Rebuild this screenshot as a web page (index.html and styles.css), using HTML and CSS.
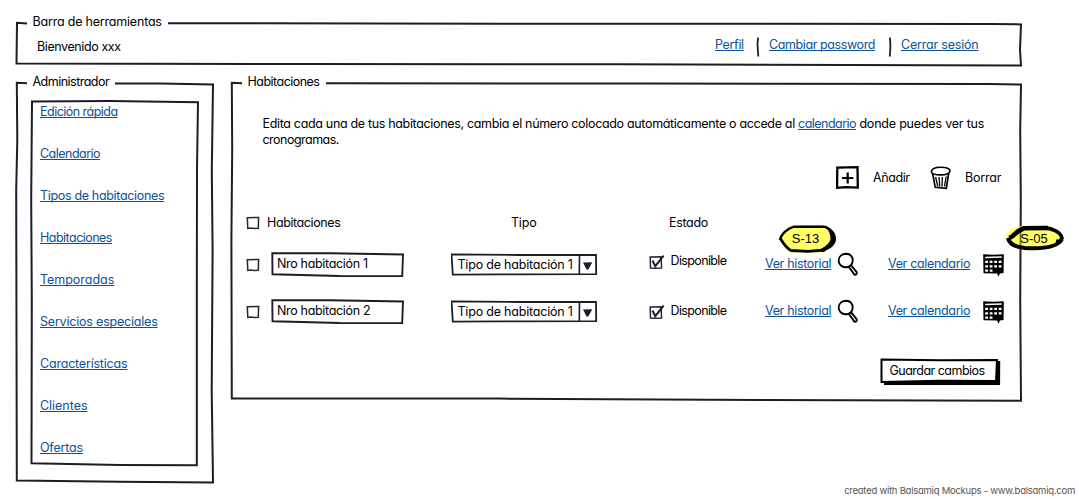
FILE: index.html
```html
<!DOCTYPE html>
<html lang="es">
<head>
<meta charset="utf-8">
<title>Habitaciones</title>
<link rel="stylesheet" href="styles.css">
</head>
<body>
<svg class="defs" width="0" height="0">
  <symbol id="box" viewBox="0 0 14 14"><path d="M1.3 1.8 12.6 1.5 12.3 12.2 8 12.6 5 12 1.8 12.5Z" fill="#fff" stroke="#242633" stroke-width="1.5"/></symbol>
  <symbol id="checked" viewBox="0 0 16 16"><path d="M1.2 3 12 2.7 12.6 14 6 14.3 1.5 14Z" fill="#fff" stroke="#242633" stroke-width="1.5"/><path d="M3.5 6.5 6.3 12.2 14.6 1.6" fill="none" stroke="#1b1b24" stroke-width="2"/></symbol>
  <symbol id="field" viewBox="271 252 133 25"><path d="M272.3 253.2 330 253.2 403 254.5 402.2 276.2 340 276 272.5 274.2Z" fill="#fff" stroke="#1c1d28" stroke-width="1.9"/></symbol>
  <symbol id="combo" viewBox="451 253 147 23"><path d="M451.5 254.3 520 255 596 255 596.2 274.2 500 274.4 452.8 274.6Z" fill="#fff" stroke="#1c1d28" stroke-width="1.8"/><path d="M579.5 255 579.3 274" stroke="#1c1d28" stroke-width="1.6"/><path d="M583 262.5 592.3 262.2 588.3 269.5 586.5 269.5Z" fill="#1c1d28"/></symbol>
  <symbol id="lens" viewBox="0 0 22 25"><path d="M9.2 1.8C13.5 1.8 15.9 5 15.7 8.8 15.5 13 12.5 15.5 8.7 15.3 4.5 15.2 1.7 12.2 1.6 8.5 1.7 4.5 5 1.9 9.2 1.8Z" fill="#fff" stroke="#000" stroke-width="1.9"/><path d="M11.8 14.8 14.2 13.4 19.8 20.3C20.1 22 19 23.2 17.4 22.6Z" fill="#fff" stroke="#000" stroke-width="1.9" stroke-linejoin="round"/></symbol>
  <symbol id="month" viewBox="0 0 22 24"><path d="M.2 1.2 10 1.8 20.8 1.2 20.6 20 17 20.5 15.5 23.5 14 20.6.5 20.2Z" fill="#000"/><path d="M2.2 4.5 18.8 4" stroke="#fff" stroke-width="1.6"/><g stroke="#fff" stroke-width="2.3"><path d="M2.2 8.8H18.8" stroke-dasharray="2.8 1.7"/><path d="M2.2 13.3H18.8" stroke-dasharray="2.8 1.7"/><path d="M2.2 17.7H10" stroke-dasharray="2.8 1.7"/></g></symbol>
</svg>

<header class="panel toolbar">
  <svg class="frame" viewBox="15 13 1008 54"><path d="M27 23.4 17 22.8 16.5 63.5 300 64 620 64.3 1021 65.4 1020 50 1021 24.4 990 24 500 23.7 168 23.2"/></svg>
  <div class="legend loose">Barra de herramientas</div>
  <div class="bar">
    <span class="welcome snug">Bienvenido xxx</span>
    <nav class="account">
      <a>Perfil</a><svg class="sep" viewBox="0 0 4 20"><path d="M2 .5 1.5 8 2.3 19.5"/></svg>
      <a class="snug">Cambiar password</a><svg class="sep" viewBox="0 0 4 20"><path d="M2 .5 2.4 9 1.8 19.5"/></svg>
      <a class="loose">Cerrar sesión</a>
    </nav>
  </div>
</header>

<div class="columns">
  <aside class="panel sidebar">
    <svg class="frame" viewBox="15 73 200 412"><path d="M27 83.2 16.8 82.8 17.3 140 16.2 190 16.8 480.5 120 481.8 213 482.6 211.7 390 212.6 250 211.8 170 213 84.6 160 83.6 115 83.4"/><path d="M32 101.5 110 101 198 102.3 197 170 196.8 300 196.8 465.3 120 465 31.5 463.2 31.8 300 31.2 200Z"/></svg>
    <div class="legend tight">Administrador</div>
    <nav class="menu">
      <a class="tight">Edición rápida</a>
      <a class="tight">Calendario</a>
      <a>Tipos de habitaciones</a>
      <a class="tight">Habitaciones</a>
      <a class="even">Temporadas</a>
      <a class="loose">Servicios especiales</a>
      <a class="loose">Características</a>
      <a class="even">Clientes</a>
      <a class="loose">Ofertas</a>
    </nav>
  </aside>

  <main class="panel rooms">
    <svg class="frame" viewBox="230 73 793 330"><path d="M242 83.3 231.8 82.8 232.2 150 231.4 240 231.8 398.5 500 398.6 760 400 1021 400.7 1020.2 300 1020.8 200 1020.2 130 1021 84.5 990 84 650 83.6 326 83.2"/></svg>
    <div class="legend tight">Habitaciones</div>
    <p class="intro">Edita cada una de tus habitaciones, cambia el número colocado automáticamente o accede al <a class="tight">calendario</a><span class="loose"> donde puedes ver tus</span><br><span class="tight">cronogramas.</span></p>
    <div class="actions">
      <svg width="24" height="24" viewBox="0 0 24 24"><path d="M1.3 1.6 21.5 1.2 21.8 21.6 10 21.2 1.1 21.8Z" fill="#fff" stroke="#000" stroke-width="2.3"/><path d="M6 12H17.4M11.7 6.5V17.5" stroke="#000" stroke-width="2.2"/></svg>
      <span class="snug">Añadir</span>
      <svg width="22" height="24" viewBox="0 0 22 24"><path d="M2.5 7 5.3 21.3 16.3 22.3 18.7 7" fill="#fff" stroke="#000" stroke-width="1.7"/><path d="M1.3 5.5C2 2.5 6 1.4 10.5 1.3 15 1.2 20 2 20 4.8 19.5 8 15 8.8 10.8 8.9 6 8.9 1.5 8.5 1.3 5.5Z" fill="#fff" stroke="#000" stroke-width="1.6"/><path d="M5.6 11 7.8 20.5M9 11 9.8 20.5M12.4 11 12 20.5M16.2 10.5 14.4 20.5" stroke="#000" stroke-width="1.3"/></svg>
      <span class="loose">Borrar</span>
    </div>
    <div class="row head">
      <svg class="box"><use href="#box"/></svg>
      <span class="h-room snug">Habitaciones</span>
      <span class="h-type loose">Tipo</span>
      <span class="h-state">Estado</span>
    </div>
    <div class="row">
      <svg class="box"><use href="#box"/></svg>
      <div class="input"><svg><use href="#field"/></svg><span>Nro habitación 1</span></div>
      <div class="select"><svg><use href="#combo"/></svg><span class="loose">Tipo de habitación 1</span></div>
      <div class="state upper"><svg><use href="#checked"/></svg><span>Disponible</span></div>
      <a class="link">Ver historial</a>
      <svg class="lens"><use href="#lens"/></svg>
      <a class="link">Ver calendario</a>
      <svg class="month"><use href="#month"/></svg>
    </div>
    <div class="row">
      <svg class="box"><use href="#box"/></svg>
      <div class="input"><svg><use href="#field"/></svg><span>Nro habitación 2</span></div>
      <div class="select"><svg><use href="#combo"/></svg><span class="loose">Tipo de habitación 1</span></div>
      <div class="state"><svg><use href="#checked"/></svg><span>Disponible</span></div>
      <a class="link">Ver historial</a>
      <svg class="lens"><use href="#lens"/></svg>
      <a class="link">Ver calendario</a>
      <svg class="month"><use href="#month"/></svg>
    </div>
    <div class="save">
      <svg viewBox="880 358 121 28"><path d="M884 381.5H997V361H1000V385H884Z" fill="#000"/><path d="M881.5 359.5 940 360.3 997 360 996 381 940 380.8 881.5 382Z" fill="#fff" stroke="#000" stroke-width="2"/><path d="M884 383.3 998.4 382.6 998.5 361" fill="none" stroke="#000" stroke-width="3.4"/></svg>
      <span class="tight">Guardar cambios</span>
    </div>
  </main>
</div>

<div class="badge first">
  <svg viewBox="778 224 60 30"><path d="M781 238 790 227 826 227 834 238 824 251 790 251Z" fill="#ff6" stroke="#ff6" stroke-width="3"/><path d="M780.5 240C780 235 788 228 794 226.7L824 226.7C830 228 832 232 834.5 236" fill="none" stroke="#000" stroke-width="2.4"/><path d="M780 238C783 243 786 248 791 250.5L808 251.3 825 250" fill="none" stroke="#000" stroke-width="2.8"/><path d="M825 226C831 228 836 232 836 239 836 245 830 249 823 252L818 250.5C825 247 830 243 830.5 239 830.5 235 829 230 825 226Z" fill="#000"/></svg>
  <span>S-13</span>
</div>
<div class="badge second">
  <svg viewBox="1005 224 60 28"><path d="M1007 237C1009 229 1018 226 1036 226.5 1055 226 1062 232 1062 238 1061 246 1050 249 1034 249 1018 249 1008 247 1007 237Z" fill="#ff6" stroke="#ff6" stroke-width="2"/><path d="M1020.5 228V249" stroke="#6f6d34" stroke-width="1.8"/><path d="M1009 238C1014 237 1016 230.5 1024 228.2L1048 228" fill="none" stroke="#000" stroke-width="4.6"/><path d="M1044 227.6C1054 228.5 1061 233 1062 238 1060 241 1059 242 1056 241" fill="none" stroke="#000" stroke-width="3.6"/><path d="M1008 238C1009 243 1014 247 1025 248 1040 248.8 1058 247.5 1062 239" fill="none" stroke="#000" stroke-width="4"/></svg>
  <span>S-05</span>
</div>
<footer class="credit">created with Balsamiq Mockups - www.balsamiq.com</footer>
</body>
</html>
```
FILE: styles.css
```css
body {
  margin: 0;
  position: relative;
  width: 1079px;
  height: 499px;
  overflow: hidden;
  box-sizing: border-box;
  padding: 13px 0 0 15px;
  background: #fff;
  color: #000;
  font: 12.5px/16px Inter, "Liberation Sans", sans-serif;
  font-feature-settings: "cv11", "ss01";
  letter-spacing: -.33px;
  white-space: nowrap;
}
.even { letter-spacing: -.03px; }
.loose { letter-spacing: -.2px; }
.snug { letter-spacing: -.4px; }
.tight { letter-spacing: -.52px; }
.defs { position: absolute; }
svg { display: block; flex: none; }
a { color: #0a5299; text-decoration: underline; text-underline-offset: 1px; text-decoration-thickness: 1px; text-decoration-skip-ink: none; }
.panel { position: relative; box-sizing: border-box; padding-top: 1px; }
.frame { position: absolute; inset: 0; width: 100%; height: 100%; z-index: -1; fill: none; stroke: #1c1d28; stroke-width: 2; }
.legend { padding-left: 17.5px; height: 16px; }
.toolbar { width: 1008px; height: 54px; }
.bar { display: flex; justify-content: space-between; padding: 7px 0 0 22px; }
.welcome { padding-top: 2px; }
.account { display: grid; grid-template-columns: 41px 13px 119px 13px 122px; align-items: start; }
.sep { width: 4px; height: 20px; fill: none; stroke: #1c1d28; stroke-width: 1.8; }

.columns { display: flex; align-items: flex-start; gap: 15px; padding-top: 6px; }
.sidebar { width: 200px; height: 412px; }
.menu { display: flex; flex-direction: column; align-items: flex-start; gap: 26px; padding: 14px 0 0 25px; }

.rooms { width: 793px; height: 330px; }
.intro { margin: 26px 0 0 32.5px; }
.actions { display: grid; grid-template-columns: 37px 57px 35px auto; align-items: center; padding: 18px 0 0 606px; height: 24px; }
.row { display: grid; grid-template-columns: 25px 180px 199px 115px 72px 51px 95px 22px; align-items: center; height: 25px; margin: 22px 0 0 16px; }
.head { height: 16px; margin-top: 25px; }
.head + .row { margin-top: 21px; }
.box { width: 14px; height: 14px; }
.h-room { margin-left: -4px; }
.h-type { margin-left: 60px; }
.h-state { margin-left: 19px; }
.input, .select, .save { display: grid; align-items: center; }
.input > *, .select > *, .save > * { grid-area: 1 / 1; }
.input svg { width: 133px; height: 25px; }
.input span { padding: 0 0 2px 6px; }
.select svg { width: 147px; height: 23px; }
.select span { padding-left: 6.5px; }
.state { display: flex; align-items: center; gap: 5.5px; margin-left: -1px; letter-spacing: -.63px; }
.state svg { width: 16px; height: 16px; }
.state span { padding-bottom: 2px; }
.upper { padding-bottom: 6px; }
.link { padding-bottom: 2px; }
.lens { width: 22px; height: 25px; }
.month { width: 22px; height: 24px; }
.save { margin: 34px 0 0 650px; width: 121px; }
.save svg { width: 121px; height: 28px; }
.save span { padding: 0 0 3px 9.5px; }

/* callouts lie over the page */
.badge { position: absolute; display: grid; place-items: center; width: 60px; top: 224px; letter-spacing: 0; }
.badge > * { grid-area: 1 / 1; }
.badge svg { width: 60px; }
.badge span { font-family: "Liberation Sans", sans-serif; font-size: 13px; }
.first { left: 778px; }
.first span { padding-right: 5px; }
.second { left: 1005px; }
.second span { padding: 2px 2px 0 0; }
.credit { position: absolute; right: 4px; bottom: 0; font-size: 9.5px; letter-spacing: -.25px; color: #555; }
```
